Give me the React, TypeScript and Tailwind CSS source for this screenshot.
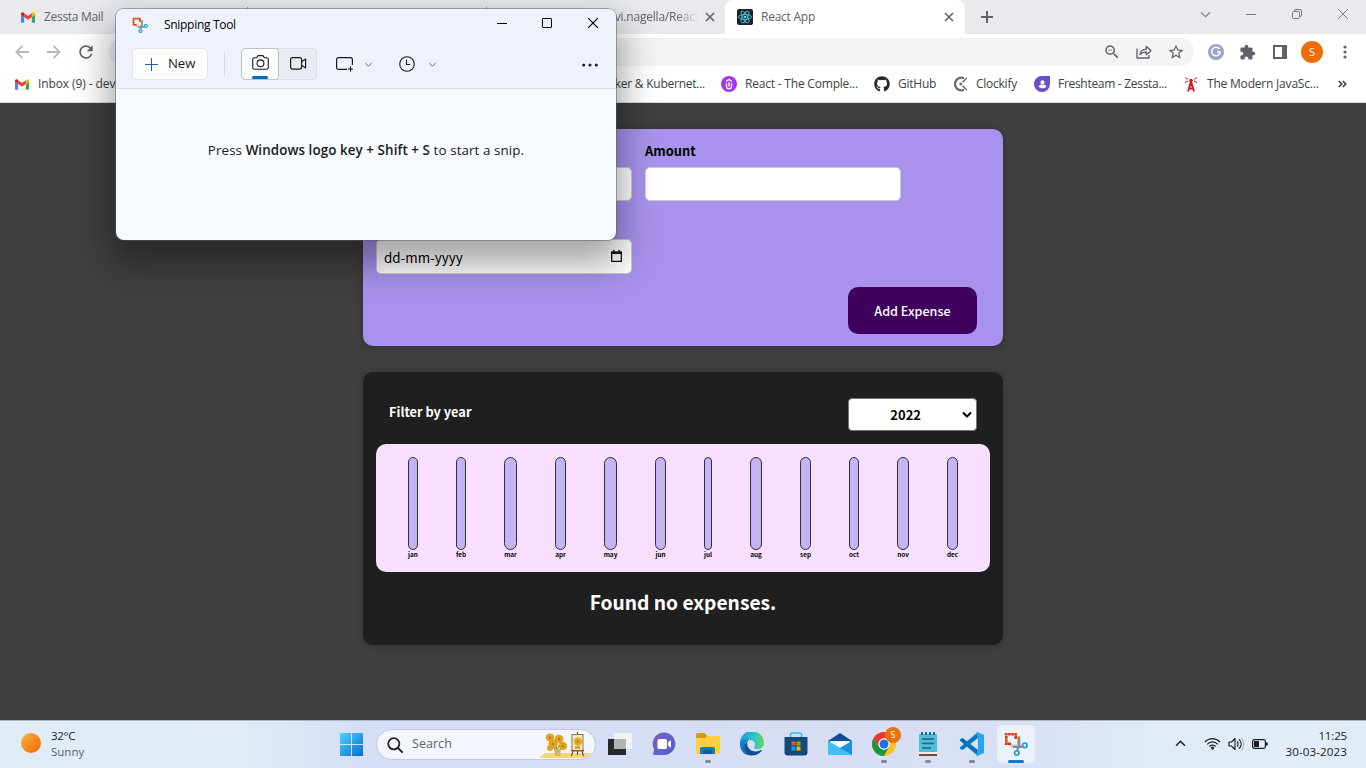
import React from "react";
import { FaGithub } from "react-icons/fa";
import { MdExtension, MdRefresh, MdStarOutline, MdZoomOut } from "react-icons/md";

type IconProps = { className?: string };

const months = [
  { name: "jan", width: 10 },
  { name: "feb", width: 10 },
  { name: "mar", width: 13 },
  { name: "apr", width: 11 },
  { name: "may", width: 13 },
  { name: "jun", width: 11 },
  { name: "jul", width: 8 },
  { name: "aug", width: 12 },
  { name: "sep", width: 11 },
  { name: "oct", width: 10 },
  { name: "nov", width: 12 },
  { name: "dec", width: 11 },
];

function Gmail({ className = "" }: IconProps) {
  return (
    <svg viewBox="0 0 24 18" className={className}>
      <path d="M0 3v13.4c0 .9.7 1.6 1.6 1.6h3.8V8z" fill="#4285f4" />
      <path d="M24 3v13.4c0 .9-.7 1.6-1.6 1.6h-3.8V8z" fill="#34a853" />
      <path d="M18.6 1.6V8L24 4V2.4C24 .4 21.6-.7 20 .5z" fill="#fbbc04" />
      <path d="M5.4 8V1.6L12 6.600l6.600-5V8L12 13z" fill="#ea4335" />
      <path d="M0 2.400V4l5.400 4V1.600L4 .500C2.400-.700 0 .400 0 2.400z" fill="#c5221f" />
    </svg>
  );
}

function ReactLogo({ className = "" }: IconProps) {
  return (
    <svg viewBox="0 0 16 16" className={className}>
      <rect width="16" height="16" rx="2" fill="#20232a" />
      <g fill="none" stroke="#53c1de" strokeWidth=".9">
        <ellipse cx="8" cy="8" rx="6.500" ry="2.500" />
        <ellipse cx="8" cy="8" rx="6.500" ry="2.500" transform="rotate(60 8 8)" />
        <ellipse cx="8" cy="8" rx="6.500" ry="2.500" transform="rotate(120 8 8)" />
      </g>
      <circle cx="8" cy="8" r="1.300" fill="#61dafb" />
    </svg>
  );
}

function Cross({ className = "" }: IconProps) {
  return (
    <svg viewBox="0 0 10 10" className={className} fill="none" stroke="currentColor">
      <path d="M1 1l8 8M9 1l-8 8" />
    </svg>
  );
}

function Chevron({ className = "" }: IconProps) {
  return (
    <svg viewBox="0 0 10 6" className={className} fill="none" stroke="currentColor">
      <path d="M1 1l4 4 4-4" />
    </svg>
  );
}

function SnipIcon({ className = "" }: IconProps) {
  return (
    <svg viewBox="0 0 24 24" className={className} fill="none">
      <path d="M13 4h3.500v12L13 13.500z" fill="#b9bbbd" />
      <path d="M4 12.500h13v3.500H9z" fill="#c0c2c4" />
      <path d="M1 2.300h12M2.300 1v12" stroke="#d83b01" strokeWidth="2.600" strokeDasharray="2.600 .5" />
      <path d="M11.700 3.500v3.500M3.500 11.700H7" stroke="#d83b01" strokeWidth="2.600" />
      <path d="M15 5v9.500l-2 4M9 15h7.500l2.500-1" stroke="#85898d" strokeWidth="2" />
      <circle cx="20.800" cy="13.400" r="2.200" stroke="#239ddc" strokeWidth="1.800" />
      <circle cx="12.800" cy="21" r="2.200" stroke="#239ddc" strokeWidth="1.800" />
    </svg>
  );
}

function Tabs() {
  return (
    <div className="flex h-[34px] bg-[#e8eaed] text-[#5f6368]">
      <div className="flex w-[247px] items-center gap-[9px] pl-[21px] text-[12px] tracking-[-0.3px]">
        <Gmail className="h-[11px] w-[14px]" />
        <span>Zessta Mail</span>
      </div>
      <div className="my-[7px] w-[240px] border-x border-[#9aa0a6]" />
      <div className="flex w-[238px] items-center pl-[114px] text-[12px]">
        <span className="w-[97px] overflow-hidden whitespace-nowrap tracking-[-0.2px] [mask-image:linear-gradient(to_right,black_78%,transparent)]">
          devi.nagella/React
        </span>
        <Cross className="ml-[7px] size-[10px] stroke-[1.6]" />
      </div>
      <div className="flex w-[240px] items-center rounded-t-[8px] bg-white pr-[11px] pl-[12px] text-[12px]">
        <ReactLogo className="size-4" />
        <span className="ml-2 flex-1 tracking-[-0.25px]">React App</span>
        <Cross className="size-[10px] stroke-[1.6]" />
      </div>
      <div className="flex flex-1 items-center pl-[16px]">
        <svg viewBox="0 0 12 12" className="size-3" stroke="currentColor" strokeWidth="2">
          <path d="M6 0v12M0 6h12" />
        </svg>
        <div className="mb-[6px] ml-auto flex items-center text-[#777a7e]">
          <span className="flex w-[46px] justify-center"><Chevron className="h-[7px] w-[11px]" /></span>
          <span className="flex w-[46px] justify-center"><span className="h-px w-[10px] bg-[#777a7e]" /></span>
          <span className="flex w-[46px] justify-center">
            <svg viewBox="0 0 10 10" className="size-[10px]" fill="none" stroke="currentColor">
              <rect x=".5" y="2.500" width="7" height="7" rx="1" />
              <path d="M2.500 2.500V2a1.500 1.500 0 011.500-1.500h4A1.500 1.500 0 019.500 2v4A1.500 1.500 0 018 7.500" />
            </svg>
          </span>
          <span className="flex w-[46px] justify-center"><Cross className="size-[12px] stroke-[0.8]" /></span>
        </div>
      </div>
    </div>
  );
}

function Arrow({ className = "" }: IconProps) {
  return (
    <svg viewBox="0 0 14 14" className={className} fill="none" stroke="#b7babd" strokeWidth="1.800">
      <path d="M14 7H1.500M7.500 .8L1.300 7l6.200 6.200" />
    </svg>
  );
}

function Toolbar() {
  return (
    <div className="flex h-[35px] items-center bg-white pt-px pl-[15px] text-[#5f6368]">
      <Arrow className="size-[14px]" />
      <Arrow className="ml-[18px] size-[14px] rotate-180" />
      <MdRefresh className="ml-[15px] size-5" />
      <div className="ml-[13px] flex h-[28px] flex-1 items-center justify-end rounded-full bg-[#f1f3f4] pr-[9px]">
        <MdZoomOut className="size-[18px]" />
        <svg viewBox="0 0 16 16" className="ml-[15px] size-4" fill="none" stroke="currentColor" strokeWidth="1.300">
          <path d="M1 4.500V14h12v-3M4 10.500c.4-3.600 2.600-5.200 6.300-5.400V2.300L15 6.700l-4.700 4V8C7.500 8 5.600 8.700 4 10.500z" strokeLinejoin="round" />
        </svg>
        <MdStarOutline className="ml-[15px] size-[18px]" />
      </div>
      <div className="flex w-[172px] items-center pl-[14px]">
        <span className="flex size-4 items-center justify-center rounded-full bg-[#9ba4c4]">
          <svg viewBox="0 0 12 12" className="size-3" fill="none" stroke="white" strokeWidth="1.500">
            <path d="M9.500 3A4.300 4.300 0 1010.300 6H7" />
          </svg>
        </span>
        <MdExtension className="ml-[15px] size-[17px]" />
        <span className="ml-[17px] h-[14px] w-[14px] border-2 border-r-[5px] border-[#5f6368]" />
        <span className="ml-[14px] flex size-[22px] items-center justify-center rounded-full bg-[#ef6c00] text-[11px] text-white">S</span>
        <svg viewBox="0 0 4 14" className="ml-[20px] h-[14px] w-1" fill="currentColor">
          <circle cx="2" cy="2" r="1.600" />
          <circle cx="2" cy="7" r="1.600" />
          <circle cx="2" cy="12" r="1.600" />
        </svg>
      </div>
    </div>
  );
}

function Bookmarks() {
  return (
    <div className="flex h-[34px] items-center overflow-hidden border-b border-[#d5d7da] bg-white pb-[3px] pl-[15px] text-[12px] tracking-[-0.25px] whitespace-nowrap text-[#3c4043]">
      <div className="flex w-[550px] items-center gap-[9px]">
        <Gmail className="h-[11px] w-[14px]" />
        <span className="tracking-[-0.1px]">Inbox (9) - devi.nagella</span>
      </div>
      <div className="flex w-[156px] items-center justify-end pr-[16px]">
        <span>Docker &amp; Kubernet...</span>
      </div>
      <div className="flex w-[153px] items-center gap-2">
        <span className="flex size-4 items-center justify-center rounded-full bg-[#a435f0]">
          <svg viewBox="0 0 12 14" className="h-[12px] w-[10px]" fill="none" stroke="white" strokeWidth="1.600">
            <path d="M2.500 4L6 1.500 9.500 4M3 6v4.200c0 3 6 3 6 0V6M6 5v5" />
          </svg>
        </span>
        <span className="tracking-[-0.2px]">React - The Comple...</span>
      </div>
      <div className="flex w-[79px] items-center gap-2">
        <FaGithub className="size-4 text-[#24292f]" />
        <span>GitHub</span>
      </div>
      <div className="flex w-[81px] items-center gap-[8px]">
        <svg viewBox="0 0 15 16" className="h-4 w-[15px]" fill="none" stroke="#6b6b6b">
          <path d="M11 2.300A6.300 6.300 0 1011 13.700" strokeWidth="2.300" />
          <path d="M9.500 6.300L13.800 2M9.500 9.700l4.300 4.300" strokeWidth="1.500" />
          <circle cx="7.700" cy="8" r="1.400" fill="#6b6b6b" stroke="none" />
        </svg>
        <span>Clockify</span>
      </div>
      <div className="flex w-[150px] items-center gap-2">
        <span className="flex size-4 items-center justify-center rounded-full rounded-tr-[3px] bg-[#6b4fc8]">
          <svg viewBox="0 0 10 10" className="size-[9px]" fill="white">
            <circle cx="5" cy="2.400" r="2.200" />
            <path d="M1 7c0-2.500 8-2.500 8 0 0 3-8 3-8 0z" />
          </svg>
        </span>
        <span className="tracking-[-0.3px]">Freshteam - Zessta...</span>
      </div>
      <div className="flex w-[154px] items-center gap-[9px]">
        <svg viewBox="0 0 14 16" className="h-4 w-[14px]" fill="none" stroke="#c8202f">
          <path d="M7 5L4 15.500M7 5l3 10.500M5.500 9.500h3M5 12.500h4" strokeWidth="1.800" />
          <path d="M1 1.500l3 2M13 1.500l-3 2M1 6.500l3-1.500M13 6.500L10 5" strokeWidth="1" />
          <circle cx="7" cy="4.500" r="1.800" fill="#c8202f" stroke="none" />
        </svg>
        <span className="tracking-[-0.2px]">The Modern JavaSc...</span>
      </div>
      <svg viewBox="0 0 9 8" className="h-2 w-[9px]" fill="none" stroke="#3c4043" strokeWidth="1.600">
        <path d="M.8 1l3 3-3 3M4.800 1l3 3-3 3" />
      </svg>
    </div>
  );
}

function ExpenseForm() {
  return (
    <section className="h-[217px] w-[640px] rounded-[10px] bg-[#a892ee] px-[13px] pt-[12px] shadow-[0_1px_6px_rgba(0,0,0,0.25)]">
      <div className="flex items-end gap-[13px]">
        <div className="h-[34px] w-[256px] rounded-[5px] border border-[#ccc] bg-white" />
        <div className="w-[256px]">
          <div className="h-[26px] text-[12.900px] leading-[19px] font-bold">Amount</div>
          <div className="h-[34px] rounded-[5px] border border-[#ccc] bg-white" />
        </div>
      </div>
      <div className="mt-[38px] flex h-[35px] w-[256px] items-center justify-between rounded-[5px] border border-[#ccc] bg-white pt-px pr-[9px] pl-[7px] text-[13.4px]">
        <span>dd-mm-yyyy</span>
        <svg viewBox="0 0 11 12" className="mb-[3px] h-3 w-[11px]">
          <path d="M.7 2.500h9.600v8.800H.7z" fill="none" stroke="#111" strokeWidth="1.300" />
          <path d="M0 1.500h11V4H0zM2 0h1.500v2H2zM7.500 0H9v2H7.500z" fill="#111" />
        </svg>
      </div>
      <div className="mt-[13px] flex justify-end pr-[13px]">
        <button className="h-[47px] w-[129px] rounded-[10px] bg-[#40005d] pt-px text-[12.600px] font-medium text-white">Add Expense</button>
      </div>
    </section>
  );
}

function ExpenseList() {
  return (
    <section className="mt-[26px] h-[273px] w-[640px] rounded-[10px] bg-[#1f1f1f] px-[13px] pt-[26px] shadow-[0_1px_6px_rgba(0,0,0,0.25)]">
      <div className="flex items-center justify-between px-[13px] font-bold">
        <span className="mb-[5px] text-[12.8px] text-white">Filter by year</span>
        <div className="flex h-[33px] w-[129px] items-center justify-end rounded-[4px] border border-[#767676] bg-white pr-[4px] text-[13px] text-black">
          <span className="mr-[41px]">2022</span>
          <Chevron className="mb-px h-[7px] w-[10px] stroke-2" />
        </div>
      </div>
      <div className="mt-[13px] flex h-[128px] justify-around rounded-[10px] bg-[#f8dfff] px-[13px] pt-[13px]">
        {months.map((m) => (
          <div key={m.name} className="flex flex-col items-center" style={{ width: m.width }}>
            <div className="h-[93px] w-full rounded-[10px] border border-[#313131] bg-[#c3b4f3]" />
            <div className="text-[6.4px] leading-[10px] font-bold text-black">{m.name}</div>
          </div>
        ))}
      </div>
      <h2 className="mt-[15px] text-center text-[19.200px] leading-[30px] font-bold text-white">Found no expenses.</h2>
    </section>
  );
}

function SnippingTool() {
  return (
    <div className="absolute top-[9px] left-[116px] flex h-[231px] w-[500px] flex-col overflow-hidden rounded-[8px] bg-[#f6fafe] text-[#1b1b1b] shadow-[0_0_0_1px_rgba(90,90,90,0.5),0_18px_36px_6px_rgba(0,0,0,0.36)]">
      <div className="h-[80px] border-b border-[#dadfe6] bg-[#eef2fa]">
        <div className="flex h-[31px] items-center pl-[16px]">
          <SnipIcon className="size-4" />
          <span className="ml-[16px] text-[12px] tracking-[-0.3px] text-black">Snipping Tool</span>
          <div className="mb-[3px] ml-auto flex items-center text-black">
            <span className="flex w-[45px] justify-center"><span className="h-px w-[10px] bg-black" /></span>
            <span className="flex w-[46px] justify-center"><span className="size-[10px] rounded-[1px] border border-black" /></span>
            <span className="flex w-[46px] justify-center"><Cross className="size-[12px]" /></span>
          </div>
        </div>
        <div className="flex h-[48px] items-center pl-[16px]">
          <button className="flex h-[32px] w-[76px] items-center rounded-[4px] border border-[#e2e5eb] bg-[#fdfdfe] pl-[12px] text-[13.2px] tracking-[-0.1px]">
            <svg viewBox="0 0 13 13" className="mr-[10px] size-[13px]" stroke="#1b1b1b" strokeWidth="1"><path d="M6.500 0v13M0 6.500h13" stroke="#2a5f96" /></svg>
            New
          </button>
          <span className="ml-[16px] h-6 w-px bg-[#d7dbe3]" />
          <div className="ml-[16px] flex h-[32px] w-[76px] rounded-[4px] border border-[#d9dde4] bg-[#e7ebf2]">
            <div className="-my-px -ml-px flex w-[38px] flex-col items-center rounded-[4px] border border-[#bfc2c7] bg-[#fbfcfe] pt-[6px]">
              <svg viewBox="0 0 17 15" className="h-[15px] w-[17px]" fill="none" stroke="#1b1b1b" strokeWidth="1.100">
                <path d="M2.500 2.800h2.300L6 .6h5l1.200 2.200h2.300c1 0 1.800.8 1.800 1.800V12.500c0 1-.8 1.800-1.800 1.800h-12c-1 0-1.800-.8-1.800-1.800V4.600c0-1 .8-1.800 1.800-1.800z" />
                <circle cx="8.500" cy="8.300" r="3.400" />
              </svg>
              <span className="mt-[6px] h-[3px] w-4 rounded-full bg-[#0067c0]" />
            </div>
            <div className="flex flex-1 items-center justify-center pb-[2px] pl-[2px]">
              <svg viewBox="0 0 17 13" className="h-[13px] w-[17px]" fill="none" stroke="#1b1b1b" strokeWidth="1.200">
                <rect x=".6" y=".6" width="11" height="11.500" rx="2" />
                <path d="M11.600 4.800l4-2.800v9l-4-2.800" strokeLinejoin="round" />
              </svg>
            </div>
          </div>
          <svg viewBox="0 0 18 15" className="ml-[19px] h-[15px] w-[18px]" fill="none" stroke="#1b1b1b" strokeWidth="1.200">
            <path d="M11 12.400H2.600c-1 0-2-.8-2-2V2.600c0-1 1-2 2-2h11.800c1 0 2 1 2 2V8M14.500 9.500v5M12 12h5" />
          </svg>
          <Chevron className="ml-[10px] h-[5px] w-[9px] text-[#555]" />
          <svg viewBox="0 0 16 16" className="ml-[26px] size-4" fill="none" stroke="#1b1b1b" strokeWidth="1.100">
            <circle cx="8" cy="8" r="7.300" />
            <path d="M7.500 3.500v5h3.700" />
          </svg>
          <Chevron className="ml-[13px] h-[5px] w-[9px] text-[#555]" />
          <svg viewBox="0 0 16 4" className="mt-[2px] mr-[18px] ml-auto h-1 w-4" fill="#1b1b1b">
            <circle cx="1.700" cy="2" r="1.500" />
            <circle cx="8" cy="2" r="1.500" />
            <circle cx="14.300" cy="2" r="1.500" />
          </svg>
        </div>
      </div>
      <p className="pt-[51px] text-center text-[13.400px] leading-[20px] tracking-[0.080px]">
        Press <span className="font-semibold">Windows logo key + Shift + S</span> to start a snip.
      </p>
    </div>
  );
}

function Sunflowers() {
  return (
    <svg viewBox="0 0 52 26" className="h-[26px] w-[52px]">
      <path d="M6 21h46c-2 3-5 5-8 5H0z" fill="#f4d878" />
      <path d="M16 18l-4-9m5 9l6-8m-6 8l1-14" stroke="#7f8e34" strokeWidth="1.200" />
      <path d="M15 17h7l-1 7h-5z" fill="#dbb35d" />
      <g fill="#e5a51c" stroke="#d99a1d" strokeWidth="1.200" strokeDasharray="1.500 .5">
        <circle cx="11" cy="5.500" r="3.600" />
        <circle cx="20" cy="7" r="3.800" />
        <circle cx="14" cy="12" r="4" />
        <circle cx="24" cy="14" r="3.600" />
        <circle cx="11" cy="16" r="2.500" />
      </g>
      <g fill="#b97713">
        <circle cx="11" cy="5.500" r="1.200" />
        <circle cx="20" cy="7" r="1.200" />
        <circle cx="14" cy="12" r="1.200" />
        <circle cx="24" cy="14" r="1.200" />
      </g>
      <path d="M34 19l-1.500 5M43 19l1.500 5M38.500 18v5M38.500 3V0" stroke="#74512d" strokeWidth="1.200" />
      <rect x="33" y="2.500" width="11" height="16" fill="#f6e9bd" stroke="#947045" />
      <circle cx="39" cy="9.500" r="4" fill="#e9a718" />
      <circle cx="39" cy="9.500" r="1.200" fill="#bd7c13" />
      <path d="M36 14h5v3h-5z" fill="#d7a84b" />
      <path d="M32 18h13v1.500H32z" fill="#8c6432" />
    </svg>
  );
}

function AppSlot({ children, running = false }: { children: React.ReactNode; running?: boolean }) {
  return (
    <div className="flex h-[48px] w-[44px] flex-col items-center pt-[11px]">
      <div className="flex h-6 items-center">{children}</div>
      {running && <span className="mt-[4px] h-[3px] w-[6px] rounded-full bg-[#85888f]" />}
    </div>
  );
}

function Taskbar() {
  return (
    <footer className="flex h-[48px] items-start border-t border-[#aeb4bf] bg-[linear-gradient(90deg,#e0ecf6_0%,#e0ebf7_18%,#d4def7_27%,#d7def4_60%,#d8e1f5_76%,#e0ebf7_84%,#e0ecf7_100%)]">
      <div className="flex h-full w-[340px] items-center pl-[21px]">
        <span className="mb-[3px] size-5 rounded-full bg-linear-to-br from-[#f2b731] to-[#f2600c]" />
        <div className="mb-[2px] ml-[10px] text-[11.500px] leading-4 text-[#1b1b1b]">
          <div className="tracking-[-0.3px]">32°C</div>
          <div className="text-[#5c6066]">Sunny</div>
        </div>
      </div>
      <svg viewBox="0 0 23 23" className="mt-[12px] size-[23px]">
        <defs>
          <linearGradient id="win" x1="0" y1="0" x2="1" y2="1">
            <stop stopColor="#4fd2ff" />
            <stop offset="1" stopColor="#0070d0" />
          </linearGradient>
        </defs>
        <path d="M0 0h11v11H0zM12 0h11v11H12zM0 12h11v11H0zM12 12h11v11H12z" fill="url(#win)" />
      </svg>
      <div className="mt-[8px] ml-[13px] flex h-[31px] w-[220px] items-center overflow-hidden rounded-full border border-[#c0c9dc] bg-[#f3f6fd] pl-[10px] text-[12.600px] text-[#5f6165]">
        <svg viewBox="0 0 16 16" className="mr-[9px] size-4" fill="none" stroke="#222" strokeWidth="1.800">
          <circle cx="6.800" cy="6.800" r="5.600" />
          <path d="M11 11l4 4" strokeLinecap="round" />
        </svg>
        <span className="flex-1">Search</span>
        <span className="mr-[4px]"><Sunflowers /></span>
      </div>
      <div className="ml-[2px] flex">
        <AppSlot>
          <svg viewBox="0 0 24 24" className="size-6">
            <path d="M0 7h18v16H0z" fill="#292929" />
            <path d="M6 1h18v16H6z" fill="#f2f3f4" />
            <path d="M6 7h12v10H6z" fill="#b3b3b3" />
          </svg>
        </AppSlot>
        <AppSlot>
          <svg viewBox="0 0 24 24" className="size-6">
            <defs><linearGradient id="chat" x1="0" y1="0" x2="1" y2="1"><stop stopColor="#8c5aa9" /><stop offset=".5" stopColor="#6264cf" /><stop offset="1" stopColor="#5059c9" /></linearGradient></defs>
            <path d="M1 23l1-6A11.300 11.300 0 1112 23z" fill="url(#chat)" />
            <rect x="5.500" y="7" width="9.500" height="10" rx="1.500" fill="white" />
            <path d="M16 10.500l3-2.500v8l-3-2.500z" fill="white" />
          </svg>
        </AppSlot>
        <AppSlot running>
          <svg viewBox="0 0 24 24" className="size-6">
            <path d="M0 3c0-1 .5-2 1.500-2h7L11 3.500V9H0z" fill="#d69c0f" />
            <path d="M0 6h9l2-2h13v17a1 1 0 01-1 1H1a1 1 0 01-1-1z" fill="#ffcf43" />
            <path d="M4 22v-5a2 2 0 012-2h11a2 2 0 012 2v5z" fill="#1778ca" />
            <path d="M7 18h9v4H7z" fill="#0e5ca8" />
          </svg>
        </AppSlot>
        <AppSlot>
          <svg viewBox="0 0 24 24" className="size-6">
            <defs>
              <linearGradient id="edgeTop"><stop stopColor="#169bd8" /><stop offset=".6" stopColor="#35c4c7" /><stop offset="1" stopColor="#64d94b" /></linearGradient>
              <linearGradient id="edgeBody" x1="0" y1="0" x2="1" y2="1"><stop stopColor="#1687d8" /><stop offset="1" stopColor="#0b4c96" /></linearGradient>
            </defs>
            <path d="M0 11A12 12 0 0124 11c0 4-3 6-6.500 6-3 0-4-1.200-3-2.600 2-3-1-6.400-5-6.400S0 11 0 15z" fill="url(#edgeTop)" />
            <path d="M0 12c0-4 5-5.500 9-4-3.500.8-4.500 4-3.500 7.500 1.500 5 8.500 7 13 3.500l3.500-1C17 26 0 26 0 12z" fill="url(#edgeBody)" />
            <path d="M9 8c-3 2-2 7 1 9.500 3.500 3 9 2 12 .5-3 5-9 7-14 3.500C3 18 4 10 9 8z" fill="#104d97" />
          </svg>
        </AppSlot>
        <AppSlot>
          <svg viewBox="0 0 24 24" className="size-6">
            <path d="M6.500 6V2.500c0-1 .5-1.500 1.500-1.500h8c1 0 1.500.5 1.500 1.500V6" stroke="#39bdf3" strokeWidth="1.700" fill="none" />
            <path d="M.5 5h23v15c0 2.500-1 3.500-3 3.500h-17c-2 0-3-1-3-3.500z" fill="#174a7c" />
            <path d="M7.500 9.500h4v4h-4z" fill="#f25022" />
            <path d="M12.500 9.500h4v4h-4z" fill="#7fba00" />
            <path d="M7.500 14.500h4v4h-4z" fill="#00a4ef" />
            <path d="M12.500 14.500h4v4h-4z" fill="#ffb900" />
          </svg>
        </AppSlot>
        <AppSlot>
          <svg viewBox="0 0 24 24" className="size-6">
            <path d="M0 9L12 1l12 8v2H0z" fill="#0b4b99" />
            <path d="M2 9h20v8H2z" fill="#f5fafc" />
            <path d="M0 9l12 7L24 9v14H0z" fill="#2fb6ef" />
            <path d="M0 9l24 14H0z" fill="#3fc0f2" />
            <path d="M12 16l12-7v14z" fill="#1c92dc" />
          </svg>
        </AppSlot>
        <AppSlot running>
          <div className="relative">
            <svg viewBox="0 0 24 24" className="size-6">
              <circle cx="12" cy="12" r="12" fill="#fcc31e" />
              <path d="M1.600 6A12 12 0 0122.400 6H12L7 15z" fill="#e33b2e" />
              <path d="M1.600 6A12 12 0 0012 24l5-9H7z" fill="#229342" />
              <circle cx="12" cy="12" r="5.700" fill="white" />
              <circle cx="12" cy="12" r="4.500" fill="#1a73e8" />
            </svg>
            <span className="absolute -top-[5px] left-[13px] flex size-4 items-center justify-center rounded-full bg-[#e8710a] text-[9px] text-white">S</span>
          </div>
        </AppSlot>
        <AppSlot running>
          <svg viewBox="0 0 18 24" className="h-6 w-[18px]">
            <path d="M0 20h18v4H0z" fill="#8d431b" />
            <path d="M0 20h18v2H0z" fill="#f2eee7" />
            <path d="M0 2h18v18H0z" fill="#53bdd7" />
            <path d="M3 0v3M7 0v3M11 0v3M15 0v3" stroke="#125b72" strokeWidth="1.800" />
            <path d="M3 7h12M3 11.500h12M3 16h9" stroke="#176a82" strokeWidth="1.400" />
          </svg>
        </AppSlot>
        <AppSlot running>
          <svg viewBox="0 0 24 24" className="size-6">
            <path d="M0 7.500l1.500-1.300 1.500.1L18 18v6L0 8.800z" fill="#0b70b8" />
            <path d="M0 16.500l1.500 1.300 1.500-.1L18 6V0L0 15.200z" fill="#0878bf" />
            <path d="M17.500 0L24 3v18l-6.500 3L16 23l2-5V6l-2-5z" fill="#2aa4ec" />
          </svg>
        </AppSlot>
        <div className="mt-[4px] ml-[3px] flex h-[38px] w-[38px] flex-col items-center rounded-[4px] border border-[#e9edf5] bg-[#edf1f9] pt-[6px]">
          <SnipIcon className="size-6 shrink-0" />
          <span className="mt-[4px] h-[3px] w-4 shrink-0 rounded-full bg-[#0b78d4]" />
        </div>
      </div>
      <div className="mr-[19px] ml-auto flex h-full items-center pb-[2px] text-[#1b1b1b]">
        <Chevron className="mr-[18px] h-[7px] w-[11px] rotate-180 stroke-[1.3]" />
        <svg viewBox="0 0 17 13" className="mr-[7px] h-[13px] w-[17px]" fill="none" stroke="currentColor" strokeWidth="1.200">
          <path d="M1 5c4.200-4.500 10.800-4.500 15 0M3.200 7.300c3-3.200 7.600-3.200 10.600 0M5.400 9.500c1.800-1.900 4.400-1.900 6.200 0" />
          <circle cx="8.500" cy="11" r="1.500" fill="currentColor" stroke="none" />
        </svg>
        <svg viewBox="0 0 17 14" className="mr-[7px] h-[14px] w-[17px]" fill="none" stroke="currentColor" strokeWidth="1.100">
          <path d="M1 5h2.500L7 1.500v11L3.500 9H1zM9 4.500c1.500 1.400 1.500 3.600 0 5M11 2.500c3 2.400 3 6.600 0 9" strokeLinejoin="round" />
          <path d="M13.500 1c3 3 3 9 0 12" stroke="#b0b7bf" />
        </svg>
        <svg viewBox="0 0 16 10" className="h-[10px] w-4" fill="none" stroke="currentColor" strokeWidth="1.200">
          <rect x=".6" y=".6" width="12.800" height="8.800" rx="1.800" />
          <path d="M2 2h5v6H2zM14 3.500h1.700v3H14z" fill="currentColor" stroke="none" />
        </svg>
        <div className="ml-[17px] w-[62px] text-right text-[11.600px] leading-4 whitespace-nowrap">
          <div className="tracking-[-0.2px]">11:25</div>
          <div className="tracking-[0.1px]">30-03-2023</div>
        </div>
      </div>
    </footer>
  );
}

export default function App() {
  return (
    <div className="relative flex h-[768px] w-[1366px] flex-col overflow-hidden [font-family:'Open_Sans','Noto_Sans',sans-serif]">
      <Tabs />
      <Toolbar />
      <Bookmarks />
      <main className="flex flex-1 flex-col items-center bg-[#3f3f3f] pt-[26px] [font-family:'Noto_Sans_CJK_JP',sans-serif]">
        <ExpenseForm />
        <ExpenseList />
      </main>
      <Taskbar />
      <SnippingTool />
    </div>
  );
}
